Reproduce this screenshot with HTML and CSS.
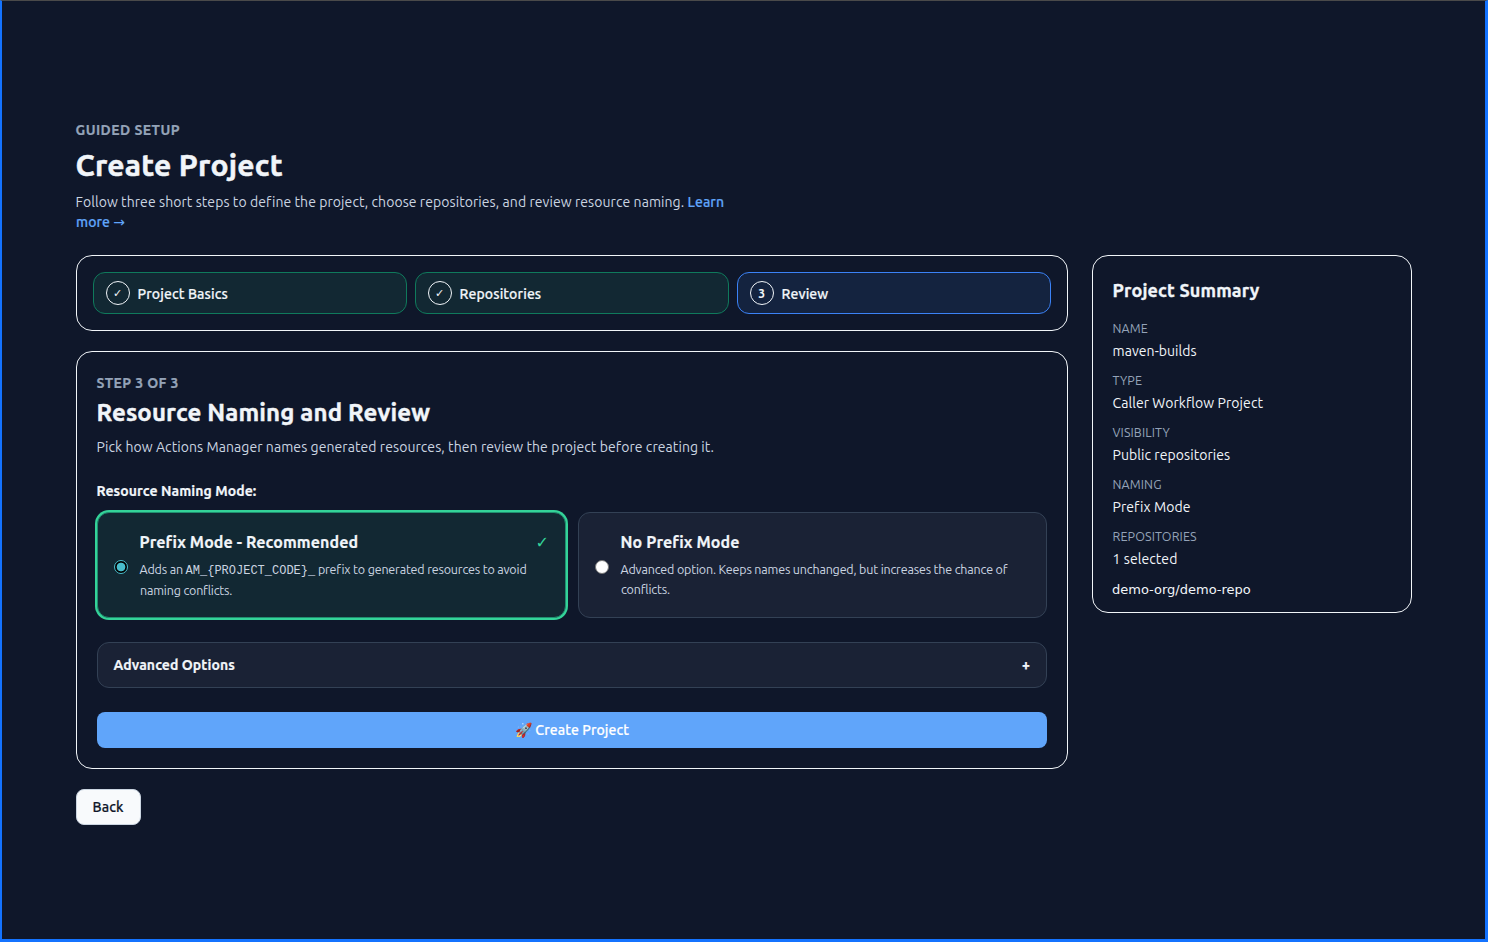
FILE: index.html
```html
<!DOCTYPE html>
<html lang="en">
<head>
<meta charset="utf-8">
<title>Create Project</title>
<link rel="stylesheet" href="styles.css">
</head>
<body>
<main class="page">
  <header class="hero">
    <div class="eyebrow">GUIDED SETUP</div>
    <h1 class="title">Create Project</h1>
    <p class="lead">Follow three short steps to define the project, choose repositories, and review resource naming. <a class="link" href="#">Learn<br>more <span class="arrow">→</span></a></p>
  </header>
  <div class="layout">
    <div class="column">
      <nav class="card stepper">
        <div class="step done"><span class="dot check">✓</span><span class="step-name">Project Basics</span></div>
        <div class="step done"><span class="dot check">✓</span><span class="step-name">Repositories</span></div>
        <div class="step current"><span class="dot">3</span><span class="step-name">Review</span></div>
      </nav>
      <section class="card panel">
        <div class="eyebrow">STEP 3 OF 3</div>
        <h2 class="subtitle">Resource Naming and Review</h2>
        <p class="lead">Pick how Actions Manager names generated resources, then review the project before creating it.</p>
        <div class="label">Resource Naming Mode:</div>
        <div class="options">
          <label class="option selected">
            <span class="radio on"></span>
            <span class="option-body">
              <span class="option-title"><b>Prefix Mode - Recommended</b><span class="tick">✓</span></span>
              <span class="option-text tall">Adds an <code>AM_{PROJECT_CODE}_</code> prefix to generated resources to avoid<br>naming conflicts.</span>
            </span>
          </label>
          <label class="option">
            <span class="radio"></span>
            <span class="option-body">
              <span class="option-title"><b>No Prefix Mode</b></span>
              <span class="option-text">Advanced option. Keeps names unchanged, but increases the chance of<br>conflicts.</span>
            </span>
          </label>
        </div>
        <div class="advanced"><span>Advanced Options</span><span>+</span></div>
        <button class="create"><span class="rocket">🚀</span> Create Project</button>
      </section>
      <button class="back">Back</button>
    </div>
    <aside class="card summary">
      <h3 class="summary-title">Project Summary</h3>
      <dl class="facts">
        <dt>NAME</dt><dd>maven-builds</dd>
        <dt>TYPE</dt><dd>Caller Workflow Project</dd>
        <dt>VISIBILITY</dt><dd>Public repositories</dd>
        <dt>NAMING</dt><dd>Prefix Mode</dd>
        <dt>REPOSITORIES</dt><dd>1 selected</dd>
      </dl>
      <div class="repo">demo-org/demo-repo</div>
    </aside>
  </div>
</main>
</body>
</html>
```
FILE: styles.css
```css
* { box-sizing: border-box; }
html { background: #0f172a; }
body {
  margin: 0;
  min-height: 942px;
  padding: 119px 73px 0 74px;
  border: 0 solid #1473ff;
  border-width: 1px 3px 3px 2px;
  border-top-color: #4a4a4a;
  color: #f1f5f9;
  font-family: Ubuntu, "Noto Sans", sans-serif;
  font-size: 14px;
  line-height: 20px;
  letter-spacing: 0.07px;
  text-indent: -0.5px;
}
.eyebrow { color: #94a3b8; font-size: 14px; font-weight: 700; height: 20px; letter-spacing: 0.45px; -webkit-text-stroke: 0.2px currentColor; }
.title { margin: 5px 0 0; font-size: 30px; line-height: 40px; font-weight: 700; letter-spacing: 0.24px; -webkit-text-stroke: 0.5px currentColor; }
.hero { height: 135px; }
.lead { margin: 7px 0 0; color: #cbd5e1; white-space: nowrap; }
.link { color: #60a5fa; text-decoration: none; font-weight: 500; -webkit-text-stroke: 0.2px currentColor; }
.arrow { font-family: "DejaVu Sans", sans-serif; -webkit-text-stroke: 0; }
.layout { display: grid; grid-template-columns: 992px 320px; gap: 24px; align-items: start; }
.card { border: 1px solid #f1f5f9; border-radius: 16px; }
.stepper { display: grid; grid-template-columns: repeat(3, 1fr); gap: 8px; padding: 16px; }
.step { display: flex; align-items: center; gap: 8px; height: 42px; padding: 0 12px; border: 1px solid #0f7a5c; border-radius: 12px; background: #122833; font-weight: 500; letter-spacing: 0.12px; }
.step-name { padding-top: 2px; -webkit-text-stroke: 0.2px currentColor; }
.current { border-color: #3b82f6; background: #14233f; }
.dot { display: flex; align-items: center; justify-content: center; width: 24px; height: 24px; padding-top: 1px; border: 1px solid #f1f5f9; border-radius: 50%; font-size: 12px; font-weight: 700; }
.check { padding-top: 2px; font-family: "DejaVu Sans", sans-serif; font-weight: 400; font-size: 11px; }
.panel { margin-top: 20px; height: 418px; padding: 21px 20px 20px; }
.panel .eyebrow { letter-spacing: 0.4px; }
.subtitle { margin: 4px 0 0; font-size: 24px; line-height: 32px; letter-spacing: 0.14px; -webkit-text-stroke: 0.4px currentColor; }
.panel .lead { margin-top: 8px; }
.label { margin-top: 24px; font-weight: 700; -webkit-text-stroke: 0.2px currentColor; }
.options { display: grid; grid-template-columns: 1fr 1fr; gap: 12px; margin-top: 11px; }
.option { display: flex; align-items: flex-start; gap: 12px; height: 106px; padding: 17px 16px 0; border: 1px solid #334155; border-radius: 12px; background: #1a2235; }
.selected { border-color: #209070; background: #122833; box-shadow: 0 0 0 2px #34d399; }
.radio { width: 14px; height: 14px; margin-top: 30px; border-radius: 50%; background: #fff; border: 1px solid #767676; }
.on { border: 1px solid #48bccb; background: radial-gradient(circle, #48bccb 0 4px, #000 4.7px); }
.option-body { flex: 1; }
.option-title { display: flex; justify-content: space-between; height: 24px; font-size: 16px; line-height: 24px; letter-spacing: 0.1px; }
.option-title b { -webkit-text-stroke: 0.2px currentColor; }
.tick { padding-top: 1px; color: #34d399; font-family: "DejaVu Sans", sans-serif; }
.option-text { display: block; margin-top: 5px; color: #cbd5e1; font-size: 12.5px; line-height: 20px; letter-spacing: -0.17px; white-space: nowrap; }
.option-text.tall { line-height: 21px; }
.option-text code { font: 12px "Liberation Mono", monospace; letter-spacing: 0; }
.advanced { display: flex; justify-content: space-between; align-items: center; margin-top: 24px; height: 46px; padding: 0 16px; border: 1px solid #334155; border-radius: 12px; background: #1a2235; font-weight: 700; -webkit-text-stroke: 0.2px currentColor; }
.create { display: block; width: 100%; height: 36px; margin-top: 24px; border: 0; border-radius: 8px; background: #60a5fa; color: #fff; font: 500 14px Ubuntu, "Noto Sans", sans-serif; letter-spacing: 0.1px; -webkit-text-stroke: 0.2px currentColor; }
.rocket { -webkit-text-stroke: 0; }
.back { display: block; width: 65px; height: 36px; margin-top: 20px; padding: 0 1px 0 0; border: 1px solid #cbd5e1; border-radius: 8px; background: #f8fafc; color: #0f172a; font: 500 14px Ubuntu, "Noto Sans", sans-serif; letter-spacing: 0.12px; -webkit-text-stroke: 0.2px currentColor; }
.summary { height: 358px; padding: 19px 20px 0; }
.summary-title { margin: 0; font-size: 18px; line-height: 30px; letter-spacing: 0.15px; -webkit-text-stroke: 0.3px currentColor; }
.facts { margin: 13px 0 0; }
.facts dt { color: #94a3b8; font-size: 12.5px; line-height: 20px; letter-spacing: 0.12px; }
.facts dd { margin: 3px 0 9px; }
.repo { margin-top: 11px; font: 13px/20px "DejaVu Sans", sans-serif; letter-spacing: 0; text-indent: -1px; }
```
